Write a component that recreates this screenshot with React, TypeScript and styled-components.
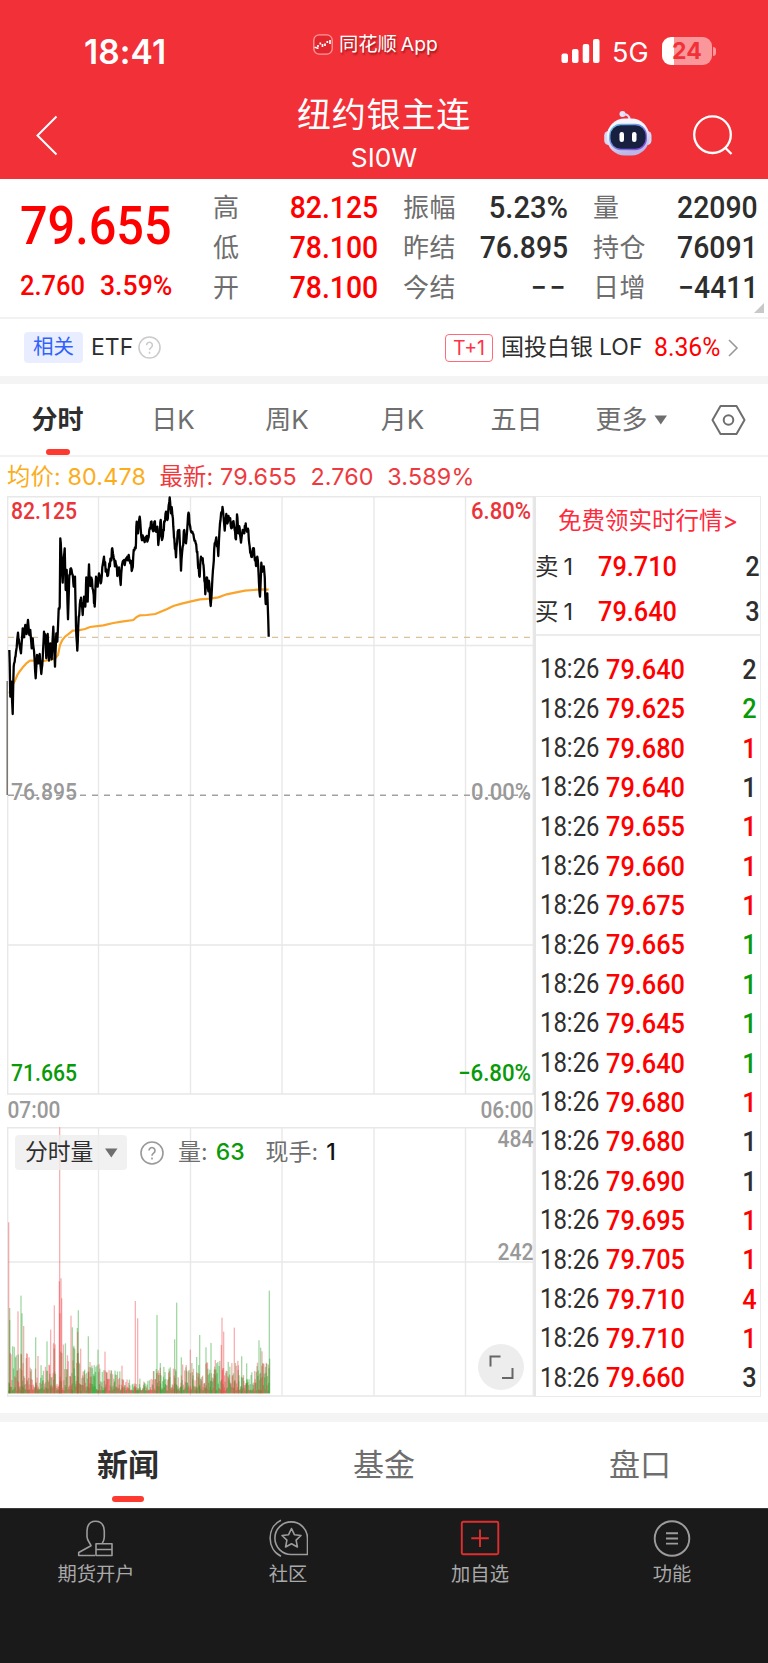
import React from "react";
import styled, { createGlobalStyle } from "styled-components";

const RED = "#ff0000";
const GREEN = "#089a08";
const INK = "#2e2e2e";
const GREY = "#6e6e6e";
const DIN = `Roboto, "Noto Sans CJK SC", sans-serif`;
const UI = `Inter, "Noto Sans CJK SC", sans-serif`;

const Global = createGlobalStyle`
  * { box-sizing: border-box; }
  body { margin: 0; background: #fff; }
`;

const Page = styled.div`
  width: 768px;
  height: 1663px;
  display: flex;
  flex-direction: column;
  overflow: hidden;
  background: #fff;
  color: ${INK};
  font-family: ${UI};
  line-height: 1;
  white-space: nowrap;
`;

/* Condensed figures used for every price, volume and percentage. */
const Figure = styled.span<{
  $size: number;
  $color?: string;
  $weight?: number;
  $sx?: number;
  $from?: "left" | "right";
  $track?: number;
}>`
  display: inline-block;
  font-family: ${DIN};
  font-size: ${(p) => p.$size}px;
  font-weight: ${(p) => p.$weight ?? 500};
  letter-spacing: ${(p) => p.$track ?? 0}px;
  color: ${(p) => p.$color ?? INK};
  transform: scaleX(${(p) => p.$sx ?? 0.92});
  transform-origin: ${(p) => p.$from ?? "left"} center;
`;

const Header = styled.header`
  height: 179px;
  background: #f23038;
  color: #fff;
`;

const StatusBar = styled.div`
  height: 78px;
  display: grid;
  grid-template-columns: 313px 1fr 207px;
  padding-top: 32px;
`;

const Clock = styled.div`
  padding: 4px 0 0 84px;
  font-size: 33.5px;
  font-weight: 600;
  letter-spacing: 0.1px;
`;

const AppTag = styled.div`
  height: 24px;
  display: flex;
  align-items: center;
  gap: 6px;
  font-size: 19.3px;
  text-shadow: 1px 2px 2px rgba(90, 0, 0, 0.55);
  span { padding-top: 2px; }
  span + span { margin-left: -2px; }
`;

const Signals = styled.div`
  height: 38px;
  display: flex;
  align-items: flex-start;
  padding-top: 5px;
`;

const Network = styled.span`
  margin: 2px 0 0 12px;
  font-size: 27px;
  width: 50px;
`;

const Battery = styled.div`
  width: 50px;
  height: 28px;
  border-radius: 9px;
  background: linear-gradient(90deg, #fff 12px, #f9979b 12px);
  color: #f23038;
  font-size: 23px;
  font-weight: 700;
  line-height: 28px;
  padding-left: 10px;
`;

const BatteryCap = styled.i`
  width: 3px;
  height: 9px;
  margin: 9.5px 0 0 1px;
  border-radius: 0 3px 3px 0;
  background: #f9979b;
`;

const NavBar = styled.div`
  height: 100px;
  display: grid;
  grid-template-columns: 168px 1fr 168px;
`;

const Back = styled.div`
  padding: 37px 0 0 35px;
`;

const Title = styled.div`
  display: flex;
  flex-direction: column;
  align-items: center;
  padding-top: 20px;
  h1 {
    margin: 0;
    font-size: 34px;
    line-height: 34px;
    font-weight: 400;
    letter-spacing: 0.8px;
  }
  span {
    margin-top: 13px;
    font-size: 26.3px;
    line-height: 26px;
  }
`;

const Tools = styled.div`
  display: flex;
  gap: 38px;
  padding: 32px 0 0 3px;
`;

const Quote = styled.section`
  position: relative;
  height: 140px;
  border-bottom: 2px solid #f2f2f2;
  display: grid;
  grid-template-columns: 213px 165px 25px 165px 25px 165px;
`;

const Last = styled.div`
  padding: 20px 0 0 20px;
  > div { display: flex; gap: 9px; margin-top: 19px; }
`;

const Stats = styled.dl`
  margin: 0;
  padding-top: 9px;
  > div {
    height: 40px;
    display: flex;
    align-items: center;
    justify-content: space-between;
  }
  dt { font-size: 26px; color: ${GREY}; letter-spacing: 0.5px; font-weight: 400; }
  dd { margin: 0; }
`;

const Spacer = styled.div``;

const Corner = styled.i`
  position: absolute;
  right: 4px;
  bottom: 4px;
  border-style: solid;
  border-width: 0 0 10px 10px;
  border-color: transparent transparent #c8c8c8 transparent;
`;

const Related = styled.section`
  height: 57px;
  display: flex;
  align-items: center;
  padding: 0 29px 0 24px;
  font-size: 23px;
`;

const BlueTag = styled.span`
  width: 59px;
  height: 31px;
  border-radius: 4px;
  background: #e8eeff;
  color: #3262fb;
  font-size: 20.5px;
  line-height: 30px;
  text-align: center;
  margin-right: 8px;
`;

const EtfName = styled.span`
  margin-right: 5px;
`;

const RedTag = styled.span`
  width: 48px;
  height: 28px;
  border: 1.5px solid #ff6b7a;
  border-radius: 4px;
  color: #ff3348;
  font-size: 19.5px;
  font-weight: 400;
  line-height: 26px;
  text-align: center;
  margin: 0 8px 0 auto;
`;

const FundName = styled.span`
  display: flex;
  gap: 6px;
  width: 153px;
`;

const FundChange = styled.div`
  width: 73px;
`;

const Band = styled.div<{ $h: number }>`
  height: ${(p) => p.$h}px;
  background: #f4f4f4;
  flex: none;
`;

const PeriodTabs = styled.nav`
  height: 73px;
  border-bottom: 2px solid #f2f2f2;
  display: grid;
  grid-template-columns: 115px 116px 112px 119px 109px 121px 72px;
`;

const Tab = styled.div<{ $active?: boolean }>`
  display: flex;
  align-items: center;
  justify-content: center;
  position: relative;
  padding-top: 1px;
  font-size: 26px;
  font-weight: ${(p) => (p.$active ? 700 : 400)};
  color: ${(p) => (p.$active ? INK : GREY)};
`;

const Marker = styled.i<{ $w: number }>`
  position: absolute;
  left: calc(50% - ${(p) => p.$w / 2}px);
  bottom: 0;
  width: ${(p) => p.$w}px;
  height: 6px;
  border-radius: 3px;
  background: #fd3a30;
`;

const Legend = styled.div`
  height: 39px;
  display: flex;
  align-items: center;
  padding: 1px 0 0 7px;
  font-size: 23.3px;
  letter-spacing: 0.16px;
  color: #ee3a3e;
  gap: 13.6px;
  b { font-weight: 400; color: #fbad1b; }
`;

const Board = styled.section`
  height: 917px;
  display: grid;
  grid-template-columns: 534px 227px;
`;

const Charts = styled.div`
  position: relative;
  display: flex;
  flex-direction: column;
  svg { display: block; flex: none; overflow: visible; }
`;

const VolumeBar = styled.div`
  position: absolute;
  left: 15px;
  top: 639px;
  height: 35px;
  display: flex;
  align-items: center;
  font-size: 23px;
  color: ${GREY};
`;

const VolumePick = styled.div`
  width: 112px;
  height: 35px;
  border-radius: 4px;
  background: rgba(238, 238, 238, 0.8);
  color: ${INK};
  font-size: 22.8px;
  display: flex;
  align-items: center;
  gap: 12px;
  padding-left: 10px;
  margin-right: 13px;
`;

const Reading = styled.span<{ $color: string; $gap?: number }>`
  margin-left: ${(p) => p.$gap ?? 14}px;
  b { font-weight: 450; color: ${(p) => p.$color}; margin-left: 8px; }
`;

const Expand = styled.div`
  position: absolute;
  left: 478px;
  top: 848px;
  width: 46px;
  height: 46px;
  border-radius: 50%;
  background: #ededed;
`;

const Ticker = styled.aside`
  height: 901px;
  border: 1.5px solid #ebebeb;
  border-left: 2px solid #e6e6e6;
`;

const Promo = styled.div`
  height: 47px;
  line-height: 47px;
  font-size: 23.5px;
  color: #ff2a3c;
  padding-left: 22px;
`;

const Depth = styled.div`
  height: 45px;
  display: grid;
  grid-template-columns: 62px 1fr auto;
  align-items: center;
  font-weight: 400;
`;

const Side = styled.span`
  display: flex;
  align-items: center;
  gap: 5px;
  font-size: 23.5px;
  margin-left: -1px;
`;

const Trades = styled.div`
  border-top: 2px solid #ececec;
  padding-top: 14px;
`;

const Trade = styled.div`
  height: 39.36px;
  display: grid;
  grid-template-columns: 66px 1fr auto;
  align-items: center;
  padding: 0 3px 0 4px;
`;

const SectionTabs = styled.nav`
  height: 86px;
  display: grid;
  grid-template-columns: repeat(3, 1fr);
  flex: none;
`;

const SectionTab = styled.div<{ $active?: boolean }>`
  position: relative;
  text-align: center;
  font-size: 31px;
  line-height: 86px;
  font-weight: ${(p) => (p.$active ? 700 : 400)};
  color: ${(p) => (p.$active ? INK : GREY)};
  i { bottom: 6px; }
`;

const BottomBar = styled.footer`
  flex: 1;
  background: #1a1a1a;
  border-top: 1px solid #3a3a3a;
  display: grid;
  grid-template-columns: repeat(4, 192px);
  padding-top: 10px;
`;

const BottomItem = styled.div`
  display: flex;
  flex-direction: column;
  align-items: center;
  gap: 6px;
  font-size: 19.3px;
  color: #a9a9a9;
  svg { display: block; }
`;

const quoteColumns = [
  [["高", "82.125"], ["低", "78.100"], ["开", "78.100"]],
  [["振幅", "5.23%"], ["昨结", "76.895"], ["今结", "−−"]],
  [["量", "22090"], ["持仓", "76091"], ["日增", "−4411"]],
];

const trades: [string, string, string][] = [
  ["79.640", "2", INK], ["79.625", "2", GREEN], ["79.680", "1", RED], ["79.640", "1", INK],
  ["79.655", "1", RED], ["79.660", "1", RED], ["79.675", "1", RED], ["79.665", "1", GREEN],
  ["79.660", "1", GREEN], ["79.645", "1", GREEN], ["79.640", "1", GREEN], ["79.680", "1", RED],
  ["79.680", "1", INK], ["79.690", "1", INK], ["79.695", "1", RED], ["79.705", "1", RED],
  ["79.710", "4", RED], ["79.710", "1", RED], ["79.660", "3", INK],
];

function random(seed: number) {
  let s = seed;
  return () => {
    s = (s * 16807) % 2147483647;
    return s / 2147483647;
  };
}

/* Turning points of the intraday price, in thirds of a pixel. */
const turns = [
  28,510, 31,650, 34,605, 38,702, 41,560, 44,545, 48,515, 54,458, 58,490, 63,520, 68,445, 72,472, 76,435, 80,462,
  84,420, 88,465, 91,450, 95,505, 98,475, 102,512, 107,595, 111,525, 115,550, 119,522, 124,582, 128,535, 132,455,
  136,465, 139,535, 143,462, 147,542, 151,490, 155,538, 160,440, 165,560, 169,460, 172,485, 176,385, 179,380,
  181,175, 185,235, 188,308, 191,240, 194,205, 197,330, 200,270, 204,418, 208,285, 213,265, 218,285, 221,320,
  225,290, 228,440, 232,512, 236,410, 241,360, 244,365, 248,405, 252,350, 256,380, 259,292, 263,365, 267,253,
  271,318, 276,300, 281,345, 284,380, 288,290, 293,320, 297,280, 302,310, 307,262, 312,230, 317,275, 322,288,
  328,250, 333,240, 337,205, 343,240, 348,255, 352,288, 357,262, 362,315, 368,245, 374,255, 380,240, 386,225,
  391,250, 397,266, 401,210, 407,205, 410,125, 414,160, 419,110, 424,170, 430,180, 436,172, 442,185, 448,150,
  453,125, 458,150, 463,126, 468,155, 472,140, 475,195, 479,160, 482,120, 486,180, 490,150, 494,125, 498,95,
  502,120, 506,75, 509,52, 513,100, 516,90, 520,140, 523,175, 528,232, 533,155, 538,150, 543,272, 548,200,
  553,150, 558,190, 563,125, 567,103, 572,150, 577,155, 582,175, 587,190, 592,215, 595,265, 599,290, 603,230,
  608,235, 612,275, 616,343, 620,292, 624,325, 628,310, 632,378, 636,320, 640,260, 644,190, 649,172, 655,228,
  660,130, 665,95, 669,92, 674,152, 679,102, 684,125, 689,115, 694,145, 699,125, 704,150, 708,178, 711,103,
  715,160, 719,145, 723,188, 728,150, 733,160, 737,130, 741,155, 745,150, 749,200, 754,230, 759,205, 763,225,
  768,258, 772,230, 776,290, 780,350, 784,248, 788,270, 793,275, 797,372, 802,340, 806,470,
];

function pricePath() {
  const rnd = random(71);
  let d = "";
  for (let i = 0; i < turns.length; i += 2) {
    const x = turns[i], y = turns[i + 1];
    if (i === 0) d = `M${x / 3} ${480 + y / 3}`;
    else {
      const px = turns[i - 2], py = turns[i - 1];
      for (const t of [0.33, 0.66]) {
        const jx = px + (x - px) * t;
        const jy = py + (y - py) * t + (rnd() - 0.5) * (x > 240 ? 28 : 12);
        d += `L${(jx / 3).toFixed(1)} ${(480 + jy / 3).toFixed(1)}`;
      }
      d += `L${(x / 3).toFixed(1)} ${(480 + y / 3).toFixed(1)}`;
    }
  }
  return d;
}

const averages = [
  28,640, 34,622, 44,604, 52,585, 60,573, 70,560, 80,549, 90,542, 110,542, 130,543, 150,540, 166,534, 174,525, 180,495,
  186,482, 195,470, 208,460, 218,452, 235,451, 255,447, 270,441, 310,436, 340,429, 370,424, 400,420, 410,411,
  420,406, 440,405, 466,402, 480,396, 500,388, 520,378, 545,371, 570,365, 600,358, 630,356, 655,352, 680,343,
  705,338, 735,332, 760,330, 785,328, 806,329,
];
const averagePath = averages.reduce(
  (d, v, i) => (i % 2 ? `${d} ${480 + v / 3}` : `${d}${i ? "L" : "M"}${v / 3}`), "");

const spikes: [number, number, number][] = [
  [26,427,0],[29,684,1],[29,720,1],[54,694,0],[63,647,1],[66,700,1],[71,738,0],[82,822,0],[87,832,0],[107,772,1],[114,828,0],
  [141,784,1],[152,749,0],[163,676,0],[179,142,0],[178,604,0],[180,700,0],[183,595,0],[185,655,0],[213,707,0],[217,742,1],
  [232,744,1],[235,691,1],[233,756,0],[242,806,0],[265,769,1],[270,846,0],[294,809,1],[315,815,0],[366,857,0],[406,663,0],
  [413,715,0],[471,705,1],[481,849,1],[524,778,1],[530,668,1],[544,832,1],[571,809,0],[590,831,1],[599,765,1],[618,802,1],
  [633,789,1],[646,840,0],[666,713,0],[664,795,0],[671,755,0],[703,743,0],[715,856,0],[725,829,1],[740,850,1],[777,781,1],
  [782,803,1],[786,814,0],[808,632,1],[809,836,1],
];

const envelope = (x: number) => {
  if (x < 50) return 135;
  if (x < 95) return 115;
  if (x < 160) return 80;
  if (x < 240) return 150;
  if (x < 300) return 80;
  if (x < 370) return 62;
  if (x < 460) return 36;
  if (x < 530) return 75;
  if (x < 630) return 85;
  if (x < 720) return 90;
  if (x < 745) return 50;
  return 85;
};

function volumeBars() {
  const rnd = random(2024);
  const bars: { x: number; h: number; up: boolean }[] = [];
  for (let x = 26; x < 808; x += 1.2) {
    const h = 8 + envelope(x) * Math.pow(rnd(), 1.6);
    bars.push({ x: x / 3, h: h / 3, up: rnd() > 0.53 });
  }
  spikes.forEach(([x, y, g]) => bars.push({ x: x / 3, h: (940 - y) / 3, up: !g }));
  return bars;
}
const bars = volumeBars();

const columns = [98.5, 190.5, 282, 374, 465.5];

const PriceChart = () => (
  <svg width="536" height="631" viewBox="0 496 536 631">
    <g stroke="#e8e8e8" strokeWidth="1.4" fill="none">
      <path d="M7.7 496.7H533.3V1094H7.7Z" />
      <path d="M7.7 645.5H533M7.7 945H533" />
      {columns.map((x) => <path key={x} d={`M${x} 496V1094`} />)}
    </g>
    <path d="M8 637.4H533" stroke="#dcc09a" strokeWidth="1.3" strokeDasharray="6 6" />
    <path d="M8 795.3H533" stroke="#a2a2a2" strokeWidth="1.5" strokeDasharray="6 6" />
    <path d="M7.2 681V795" stroke="#77706a" strokeWidth="1.5" />
    <path d={averagePath} fill="none" stroke="#fba42b" strokeWidth="2.2" />
    <path d={pricePath()} fill="none" stroke="#000" strokeWidth="2.3" strokeLinejoin="round" />
    <g fontFamily="Roboto" fontSize="23" fontWeight="500">
      <text x="11" y="518.500" fill="#ea3439" textLength="66" lengthAdjust="spacingAndGlyphs">82.125</text>
      <text x="471" y="518.500" fill="#ea3439" textLength="60" lengthAdjust="spacingAndGlyphs">6.80%</text>
      <text x="11" y="799.500" fill="#999" textLength="66" lengthAdjust="spacingAndGlyphs">76.895</text>
      <text x="471" y="799.500" fill="#999" textLength="60" lengthAdjust="spacingAndGlyphs">0.00%</text>
      <text x="11" y="1081" fill={GREEN} textLength="66" lengthAdjust="spacingAndGlyphs">71.665</text>
      <text x="458" y="1081" fill={GREEN} textLength="73" lengthAdjust="spacingAndGlyphs">−6.80%</text>
      <text x="7.500" y="1118" fill="#999" textLength="53" lengthAdjust="spacingAndGlyphs">07:00</text>
      <text x="480.500" y="1118" fill="#999" textLength="53" lengthAdjust="spacingAndGlyphs">06:00</text>
    </g>
  </svg>
);

const VolumeChart = () => (
  <svg width="536" height="271" viewBox="0 1127 536 271">
    <g stroke="#e8e8e8" strokeWidth="1.4" fill="none">
      <path d="M7.7 1127.7H533.3V1396H7.7Z" />
      <path d="M7.7 1262H533" />
      {columns.map((x) => <path key={x} d={`M${x} 1127V1396`} />)}
    </g>
    {bars.map((b, i) => (
      <rect key={i} x={b.x - 0.65} y={1393.3 - b.h} width="1.3" height={b.h}
        fill={b.up ? "#f0363c" : "#169c1a"} opacity="0.4" />
    ))}
    <g fontFamily="Roboto" fontSize="23" fontWeight="500" fill="#999">
      <text x="497.500" y="1146.500" textLength="36" lengthAdjust="spacingAndGlyphs">484</text>
      <text x="497.500" y="1260" textLength="36" lengthAdjust="spacingAndGlyphs">242</text>
    </g>
  </svg>
);

const Help = ({ size, color }: { size: number; color: string }) => (
  <svg width={size} height={size} viewBox="0 0 24 24" fill="none" stroke={color} strokeWidth="1.6">
    <circle cx="12" cy="12" r="11" />
    <path d="M9 9.600a3 3 0 1 1 4.600 2.500c-1.100.8-1.600 1.200-1.600 2.600M12 16.500v2" />
  </svg>
);

const AppLogo = () => (
  <svg width="20" height="21" viewBox="0 0 20 21" fill="none">
    <rect x="0.800" y="0.800" width="18.400" height="19.400" rx="5.500" fill="#e1262d" stroke="#ff9a9c" strokeWidth="1.300" />
    <path d="M1.500 13.500h2M5 13v-2M7.300 10.500v-2M9.500 10v3M12 9.500v2.500M14.300 9V7M17 6v4M3.500 14.200h2" stroke="#fff" strokeWidth="1.700" />
  </svg>
);

const Robot = () => (
  <svg width="50" height="46" viewBox="0 0 50 46" fill="none">
    <defs>
      <linearGradient id="shell" x1="0" y1="0" x2="0.300" y2="1">
        <stop offset="0.400" stopColor="#f7f6ff" />
        <stop offset="1" stopColor="#b9b8e6" />
      </linearGradient>
      <linearGradient id="rim" x1="0" y1="0" x2="1" y2="1">
        <stop offset="0" stopColor="#63c9ee" />
        <stop offset="1" stopColor="#8d3fe0" />
      </linearGradient>
    </defs>
    <circle cx="19.500" cy="4" r="3" fill="#e6e5fa" />
    <path d="M20 4.500q6-1 6.500 5" stroke="#dcdbf6" strokeWidth="2.200" />
    <rect x="1.200" y="21" width="10" height="14" rx="4.500" fill="#d6d5f3" />
    <rect x="38.500" y="21" width="10" height="14" rx="4.500" fill="#d6d5f3" />
    <rect x="3.800" y="8.500" width="42.500" height="37" rx="18" fill="url(#shell)" />
    <rect x="6.800" y="14.500" width="36.500" height="25" rx="11" fill="#17213f" stroke="url(#rim)" strokeWidth="1.300" />
    <rect x="16.500" y="22" width="4.500" height="10" rx="2.200" fill="#fff" />
    <rect x="29" y="22" width="4.500" height="10" rx="2.200" fill="#fff" />
  </svg>
);

const footerItems = [
  {
    label: "期货开户",
    icon: (
      <g stroke="#9c9c9c" strokeWidth="1.600" fill="none" strokeLinejoin="round">
        <path d="M18 35.500H1.700v-3L14 25.700c-.5-2.300-3.800-4.500-4-9V11C10.200 4.500 13.500 1.200 18.500 1.200S27 4.500 27.300 11v5.700c0 3-1 5-2 6.500" />
        <path d="M19 23.700h16v11.800H19zM19 29.500h16" />
      </g>
    ),
  },
  {
    label: "社区",
    icon: (
      <g stroke="#9c9c9c" strokeWidth="1.600" fill="none" strokeLinejoin="round">
        <path d="M12 .2C-2.500 7-2.500 29 12 36.300" />
        <path d="M38.500 34.500h-16A16.300 16.300 0 1 1 38.500 18.500z" />
        <path d="m22.500 8.500 2.900 6.200 6.600.8-4.900 4.700 1.300 6.800-5.900-3.300-5.900 3.300 1.300-6.800-4.900-4.700 6.600-.8z" />
      </g>
    ),
  },
  {
    label: "加自选",
    icon: (
      <g stroke="#e02e2e" strokeWidth="1.900" fill="none">
        <rect x="0.800" y="1.800" width="36.500" height="32.500" rx="1.500" />
        <path d="M19 9.500v17.500M10.300 18.200h17.500" />
      </g>
    ),
  },
  {
    label: "功能",
    icon: (
      <g stroke="#9c9c9c" strokeWidth="1.900" fill="none">
        <circle cx="19" cy="18.500" r="17.300" />
        <path d="M13 13.200h12M13 18.500h12M13 23.600h12" />
      </g>
    ),
  },
];

export default function App() {
  return (
    <Page>
      <Global />
      <Header>
        <StatusBar>
          <Clock>18:41</Clock>
          <AppTag><AppLogo /><span>同花顺</span><span>App</span></AppTag>
          <Signals>
            <svg width="39" height="26" viewBox="0 0 39 26" fill="#fff">
              <rect x="0.500" y="16.500" width="6.500" height="9.500" rx="2" />
              <rect x="11" y="12" width="6.500" height="14" rx="2" />
              <rect x="21.700" y="7" width="6.500" height="19" rx="2" />
              <rect x="32" y="2" width="6.500" height="24" rx="2" />
            </svg>
            <Network>5G</Network>
            <Battery>24</Battery>
            <BatteryCap />
          </Signals>
        </StatusBar>
        <NavBar>
          <Back>
            <svg width="24" height="42" viewBox="0 0 24 42" fill="none" stroke="#fff" strokeWidth="2">
              <path d="M21.500 1.500 2.500 20.500l19 19" />
            </svg>
          </Back>
          <Title><h1>纽约银主连</h1><span>SI0W</span></Title>
          <Tools>
            <Robot />
            <svg width="44" height="46" viewBox="0 0 44 46" fill="none" stroke="#fff" strokeWidth="2.300">
              <circle cx="21.500" cy="24.700" r="18.300" />
              <path d="m34 37.500 6.500 6.500" />
            </svg>
          </Tools>
        </NavBar>
      </Header>

      <Quote>
        <Last>
          <Figure $size={54} $color={RED} $sx={0.9}>79.655</Figure>
          <div>
            <Figure $size={28} $color={RED} $sx={0.91}>2.760</Figure>
            <Figure $size={28} $color={RED} $sx={0.95}>3.59%</Figure>
          </div>
        </Last>
        {quoteColumns.map((rows, c) => (
          <React.Fragment key={c}>
            {c > 0 && <Spacer />}
            <Stats>
              {rows.map(([name, value]) => (
                <div key={name}>
                  <dt>{name}</dt>
                  <dd>
                    <Figure
                      $size={30.5}
                      $from="right"
                      $sx={value.endsWith("%") ? 0.955 : 0.93}
                      $track={value === "−−" ? 3 : 0}
                      $color={c ? INK : RED}
                    >
                      {value}
                    </Figure>
                  </dd>
                </div>
              ))}
            </Stats>
          </React.Fragment>
        ))}
        <Corner />
      </Quote>

      <Related>
        <BlueTag>相关</BlueTag>
        <EtfName>ETF</EtfName><Help size={23} color="#cbcbcb" />
        <RedTag>T+1</RedTag>
        <FundName><span>国投白银</span><span>LOF</span></FundName>
        <FundChange><Figure $size={25} $color={RED} $weight={400} $sx={0.99}>8.36%</Figure></FundChange>
        <svg width="12" height="20" viewBox="0 0 12 20" fill="none" stroke="#999" strokeWidth="1.600">
          <path d="m2 2 8 8-8 8" />
        </svg>
      </Related>
      <Band $h={8} />

      <PeriodTabs>
        <Tab $active>分时<Marker $w={24} /></Tab>
        <Tab>日K</Tab>
        <Tab>周K</Tab>
        <Tab>月K</Tab>
        <Tab>五日</Tab>
        <Tab>
          更多
          <svg width="20" height="14" viewBox="0 0 20 14"><path d="M6.500 2.500h12.500l-6.200 9z" fill={GREY} /></svg>
        </Tab>
        <Tab>
          <svg width="35" height="30" viewBox="0 0 35 30" fill="none" stroke={GREY} strokeWidth="2">
            <path d="M9.500 1h16l8 14-8 14h-16l-8-14z" strokeLinejoin="round" />
            <circle cx="17.500" cy="15" r="4.800" />
          </svg>
        </Tab>
      </PeriodTabs>

      <Legend>
        <b>均价: 80.478</b><span>最新: 79.655</span><span>2.760</span><span>3.589%</span>
      </Legend>

      <Board>
        <Charts>
          <PriceChart />
          <VolumeChart />
          <VolumeBar>
            <VolumePick>
              分时量
              <svg width="13" height="10" viewBox="0 0 13 10"><path d="M0 .5h12.500L6.300 9.500z" fill={GREY} /></svg>
            </VolumePick>
            <Help size={24} color="#999" />
            <Reading $color={GREEN}>量:<b>63</b></Reading>
            <Reading $color="#111" $gap={21}>现手:<b>1</b></Reading>
          </VolumeBar>
          <Expand>
            <svg width="46" height="46" viewBox="0 0 46 46" fill="none" stroke="#666" strokeWidth="2">
              <path d="M12.500 22.500V12.500h10M34.500 24v10h-10.500" />
            </svg>
          </Expand>
        </Charts>
        <Ticker>
          <Promo>免费领实时行情&gt;</Promo>
          <Depth>
            <Side><span>卖</span><span>1</span></Side>
            <Figure $size={27.500} $color={RED}>79.710</Figure>
            <Figure $size={27.500} $from="right">2</Figure>
          </Depth>
          <Depth>
            <Side><span>买</span><span>1</span></Side>
            <Figure $size={27.500} $color={RED}>79.640</Figure>
            <Figure $size={27.500} $from="right">3</Figure>
          </Depth>
          <Trades>
            {trades.map(([price, qty, color], i) => (
              <Trade key={i}>
                <Figure $size={27} $weight={450} $sx={0.885}>18:26</Figure>
                <Figure $size={27.500} $color={RED}>{price}</Figure>
                <Figure $size={27.500} $color={color} $from="right">{qty}</Figure>
              </Trade>
            ))}
          </Trades>
        </Ticker>
      </Board>

      <Band $h={9} />
      <SectionTabs>
        <SectionTab $active>新闻<Marker $w={32} /></SectionTab>
        <SectionTab>基金</SectionTab>
        <SectionTab>盘口</SectionTab>
      </SectionTabs>
      <BottomBar>
        {footerItems.map((item) => (
          <BottomItem key={item.label}>
            <svg width="40" height="40" viewBox="-1 -1 40 40">{item.icon}</svg>
            {item.label}
          </BottomItem>
        ))}
      </BottomBar>
    </Page>
  );
}
